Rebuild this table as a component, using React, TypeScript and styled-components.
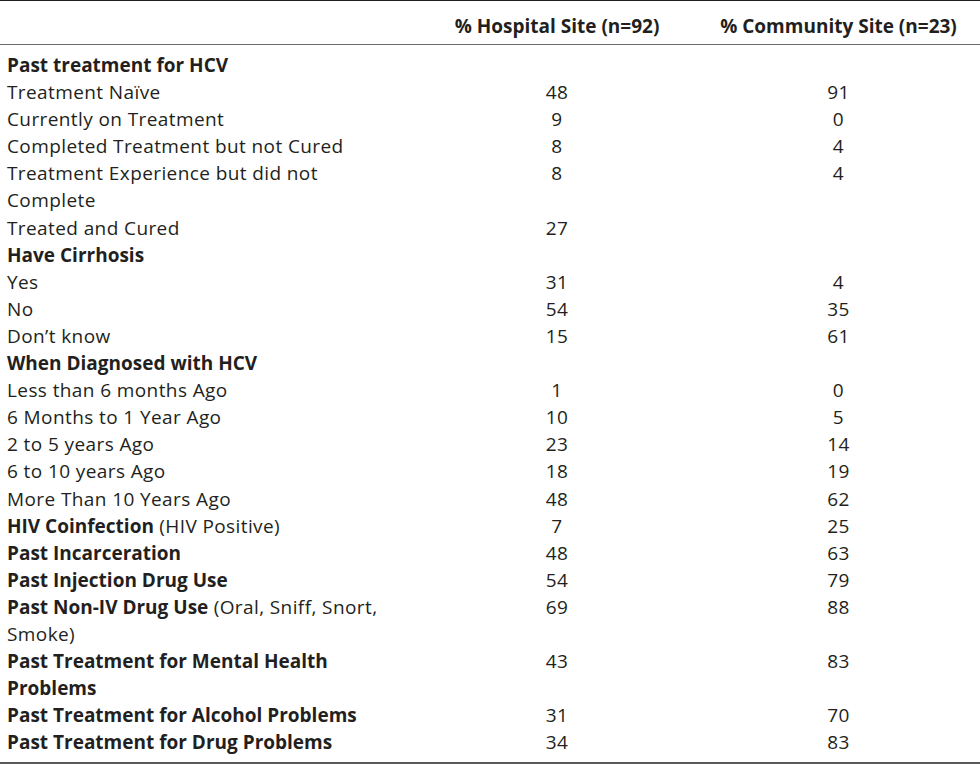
import React from "react";
import styled, { createGlobalStyle } from "styled-components";

const Global = createGlobalStyle`
  html, body { margin: 0; padding: 0; background: #fff; }
  body { font-family: "Open Sans", Lato, sans-serif; color: #231f20; }
`;

const Table = styled.div`
  width: 980px;
  display: grid;
  grid-template-columns: 417px 280px 283px;
  border-top: 1px solid #231f20;
  border-bottom: 2px solid #5a5a5a;
  font-size: 19px;
  line-height: 27.1px;
  letter-spacing: 0.4px;
`;

const HeaderCell = styled.div`
  height: 44px;
  box-sizing: border-box;
  padding-top: 12px;
  border-bottom: 1.5px solid #6a6a6a;
  font-weight: 700;
  letter-spacing: 0;
  text-align: center;
  line-height: 27px;
`;

const Body = styled.div`
  grid-column: 1 / -1;
  display: grid;
  grid-template-columns: 417px 280px 283px;
  padding: 7px 0 6px;
`;

const LabelCell = styled.div`
  padding-left: 7px;
  white-space: nowrap;
`;

const NumCell = styled.div`
  text-align: center;
`;

const B = styled.span`
  font-weight: 700;
  letter-spacing: 0;
`;

type Row = { label: React.ReactNode; h?: string; c?: string };

const rows: Row[] = [
  { label: <B>Past treatment for HCV</B> },
  { label: "Treatment Naïve", h: "48", c: "91" },
  { label: "Currently on Treatment", h: "9", c: "0" },
  { label: "Completed Treatment but not Cured", h: "8", c: "4" },
  { label: <>Treatment Experience but did not<br />Complete</>, h: "8", c: "4" },
  { label: "Treated and Cured", h: "27" },
  { label: <B>Have Cirrhosis</B> },
  { label: "Yes", h: "31", c: "4" },
  { label: "No", h: "54", c: "35" },
  { label: "Don’t know", h: "15", c: "61" },
  { label: <B>When Diagnosed with HCV</B> },
  { label: "Less than 6 months Ago", h: "1", c: "0" },
  { label: "6 Months to 1 Year Ago", h: "10", c: "5" },
  { label: "2 to 5 years Ago", h: "23", c: "14" },
  { label: "6 to 10 years Ago", h: "18", c: "19" },
  { label: "More Than 10 Years Ago", h: "48", c: "62" },
  { label: <><B>HIV Coinfection</B> (HIV Positive)</>, h: "7", c: "25" },
  { label: <B>Past Incarceration</B>, h: "48", c: "63" },
  { label: <B>Past Injection Drug Use</B>, h: "54", c: "79" },
  { label: <><B>Past Non-IV Drug Use</B> (Oral, Sniff, Snort,<br />Smoke)</>, h: "69", c: "88" },
  { label: <B>Past Treatment for Mental Health<br />Problems</B>, h: "43", c: "83" },
  { label: <B>Past Treatment for Alcohol Problems</B>, h: "31", c: "70" },
  { label: <B>Past Treatment for Drug Problems</B>, h: "34", c: "83" },
];

export default function App() {
  return (
    <>
      <Global />
      <Table>
        <HeaderCell />
        <HeaderCell>% Hospital Site (n=92)</HeaderCell>
        <HeaderCell>% Community Site (n=23)</HeaderCell>
        <Body>
          {rows.map((r, i) => (
            <React.Fragment key={i}>
              <LabelCell>{r.label}</LabelCell>
              <NumCell>{r.h ?? ""}</NumCell>
              <NumCell>{r.c ?? ""}</NumCell>
            </React.Fragment>
          ))}
        </Body>
      </Table>
    </>
  );
}
